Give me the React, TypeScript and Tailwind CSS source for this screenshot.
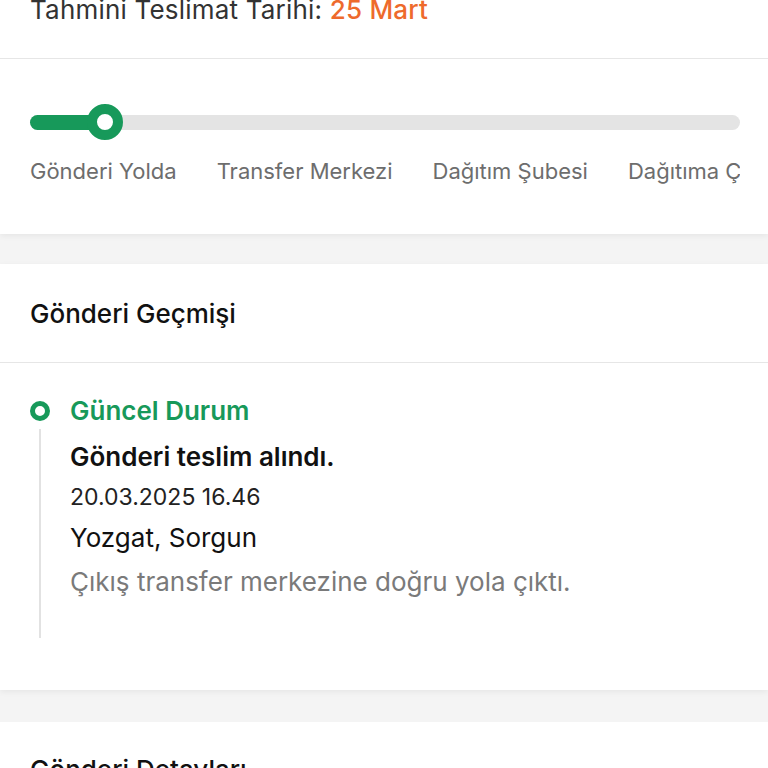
import React from "react";

const steps = ["Gönderi Yolda", "Transfer Merkezi", "Dağıtım Şubesi", "Dağıtıma Çıktı", "Teslim Edildi"];

function ProgressTrack() {
  return (
    <div className="relative h-[36px] flex items-center">
      <div className="w-full h-[15px] rounded-full bg-[#e4e4e4]" />
      <div className="absolute left-0 h-[15px] w-[80px] rounded-full bg-[#17995a]" />
      <div className="absolute left-[57px] w-[36px] h-[36px] rounded-full border-[10px] border-[#17995a] bg-white" />
    </div>
  );
}

export default function App() {
  return (
    <div className="w-[768px] h-[768px] overflow-hidden bg-[#f4f4f4] font-['Inter',sans-serif]">
      <div className="bg-white shadow-[0_2px_6px_rgba(0,0,0,0.06)]">
        <div className="h-[59px] px-[30px] flex items-start border-b border-[#e6e6e6]">
          <p className="-mt-[7px] text-[26px] leading-[34px] text-[#333] tracking-[0.2px]">
            Tahmini Teslimat Tarihi: <span className="text-[#ee6a2c] font-medium">25 Mart</span>
          </p>
        </div>
        <div className="pl-[30px] pr-[28px] pt-[45px] pb-[49px]">
          <ProgressTrack />
          <div className="mt-[17px] flex gap-[40px] overflow-hidden whitespace-nowrap text-[22px] leading-[28px] text-[#6d6d6d]">
            {steps.map((s) => (
              <span key={s}>{s}</span>
            ))}
          </div>
        </div>
      </div>

      <div className="mt-[30px] bg-white shadow-[0_2px_6px_rgba(0,0,0,0.06)]">
        <div className="h-[99px] px-[30px] flex items-center border-b border-[#e6e6e6]">
          <h2 className="text-[26px] font-medium text-[#111]">Gönderi Geçmişi</h2>
        </div>
        <div className="px-[30px] pt-[30px] pb-[52px]">
          <div className="flex items-center gap-[20px] h-[36px]">
            <div className="w-[20px] h-[20px] rounded-full border-[5px] border-[#17995a] bg-white" />
            <span className="text-[26px] leading-[36px] font-semibold text-[#17995a]">Güncel Durum</span>
          </div>
          <div className="ml-[9px] border-l-2 border-[#e2e2e2] pl-[29px] pt-[10px] pb-[38px]">
            <p className="text-[26px] font-semibold leading-[36px] text-[#111]">Gönderi teslim alındı.</p>
            <p className="mt-[4px] text-[23px] leading-[36px] text-[#222]">20.03.2025 16.46</p>
            <p className="mt-[5px] text-[26px] leading-[36px] text-[#111]">Yozgat, Sorgun</p>
            <p className="mt-[8px] text-[26px] leading-[36px] text-[#7a7a7a]">Çıkış transfer merkezine doğru yola çıktı.</p>
          </div>
        </div>
      </div>

      <div className="mt-[32px] bg-white">
        <div className="px-[30px] pt-[28px]">
          <h2 className="text-[26px] font-medium text-[#111]">Gönderi Detayları</h2>
        </div>
      </div>
    </div>
  );
}
